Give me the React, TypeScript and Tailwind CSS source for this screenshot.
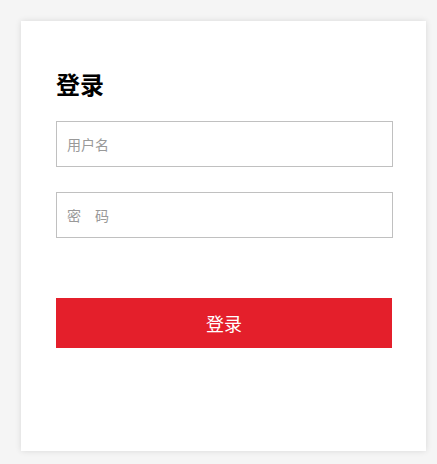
import * as React from "react";

const font = { fontFamily: '"Noto Sans CJK SC", "Noto Sans", sans-serif' };

export default function App() {
  return (
    <div className="h-[464px] w-[437px] bg-[#f5f5f5] p-[21px]" style={font}>
      <div className="h-[430px] w-[405px] bg-white pl-[35px] pr-[33px] pt-[50px] shadow-[0_0_6px_rgba(0,0,0,0.12)]">
        <h1 className="text-[24px] font-bold leading-[26px] text-black">登录</h1>
        <div className="mt-[24px] flex flex-col gap-[25px]">
          <input
            className="h-[46px] w-full border border-[#c0c0c0] px-[10px] text-[14px] text-[#333] outline-none placeholder:text-[#999]"
            placeholder="用户名"
          />
          <input
            type="password"
            className="h-[46px] w-full border border-[#c0c0c0] px-[10px] text-[14px] text-[#333] outline-none placeholder:text-[#999]"
            placeholder="密　码"
          />
        </div>
        <button className="mt-[60px] flex h-[50px] w-[336px] items-center justify-center bg-[#e41f2b] text-[18px] text-white">
          登录
        </button>
      </div>
    </div>
  );
}
